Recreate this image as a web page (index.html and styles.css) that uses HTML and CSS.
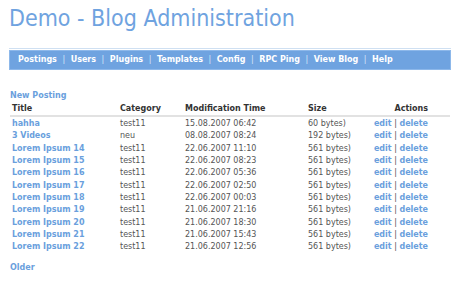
FILE: index.html
```html
<!doctype html>
<html>
	<head>
		<meta charset="utf-8">
		<title>Demo - Blog Administration</title>
		<link rel="stylesheet" href="styles.css">
	</head>
	<body>
		<h1 class="site-title">Demo - Blog Administration</h1>

		<div class="menu">
			<a href="#">Postings</a> <span class="sep">|</span>
			<a href="#">Users</a> <span class="sep">|</span>
			<a href="#">Plugins</a> <span class="sep">|</span>
			<a href="#">Templates</a> <span class="sep">|</span>
			<a href="#">Config</a> <span class="sep">|</span>
			<a href="#">RPC Ping</a> <span class="sep">|</span>
			<a href="#">View Blog</a> <span class="sep">|</span>
			<a href="#">Help</a>
		</div>

		<div class="content">
			<a class="new-posting" href="#">New Posting</a>
			<table class="postings">
				<tr>
					<th class="c-title">Title</th>
					<th class="c-cat">Category</th>
					<th class="c-time">Modification Time</th>
					<th class="c-size">Size</th>
					<th class="c-act">Actions</th>
				</tr>
				<tr><td><a href="#">hahha</a></td><td>test11</td><td>15.08.2007 06:42</td><td>60 bytes)</td><td class="c-act"><a href="#">edit</a> | <a href="#">delete</a></td></tr>
				<tr><td><a href="#">3 Videos</a></td><td>neu</td><td>08.08.2007 08:24</td><td>192 bytes)</td><td class="c-act"><a href="#">edit</a> | <a href="#">delete</a></td></tr>
				<tr><td><a href="#">Lorem Ipsum 14</a></td><td>test11</td><td>22.06.2007 11:10</td><td>561 bytes)</td><td class="c-act"><a href="#">edit</a> | <a href="#">delete</a></td></tr>
				<tr><td><a href="#">Lorem Ipsum 15</a></td><td>test11</td><td>22.06.2007 08:23</td><td>561 bytes)</td><td class="c-act"><a href="#">edit</a> | <a href="#">delete</a></td></tr>
				<tr><td><a href="#">Lorem Ipsum 16</a></td><td>test11</td><td>22.06.2007 05:36</td><td>561 bytes)</td><td class="c-act"><a href="#">edit</a> | <a href="#">delete</a></td></tr>
				<tr><td><a href="#">Lorem Ipsum 17</a></td><td>test11</td><td>22.06.2007 02:50</td><td>561 bytes)</td><td class="c-act"><a href="#">edit</a> | <a href="#">delete</a></td></tr>
				<tr><td><a href="#">Lorem Ipsum 18</a></td><td>test11</td><td>22.06.2007 00:03</td><td>561 bytes)</td><td class="c-act"><a href="#">edit</a> | <a href="#">delete</a></td></tr>
				<tr><td><a href="#">Lorem Ipsum 19</a></td><td>test11</td><td>21.06.2007 21:16</td><td>561 bytes)</td><td class="c-act"><a href="#">edit</a> | <a href="#">delete</a></td></tr>
				<tr><td><a href="#">Lorem Ipsum 20</a></td><td>test11</td><td>21.06.2007 18:30</td><td>561 bytes)</td><td class="c-act"><a href="#">edit</a> | <a href="#">delete</a></td></tr>
				<tr><td><a href="#">Lorem Ipsum 21</a></td><td>test11</td><td>21.06.2007 15:43</td><td>561 bytes)</td><td class="c-act"><a href="#">edit</a> | <a href="#">delete</a></td></tr>
				<tr><td><a href="#">Lorem Ipsum 22</a></td><td>test11</td><td>21.06.2007 12:56</td><td>561 bytes)</td><td class="c-act"><a href="#">edit</a> | <a href="#">delete</a></td></tr>
			</table>
			<a class="older" href="#">Older</a>
		</div>
	</body>
</html>
```

FILE: styles.css
```css
body
{
	margin: 0;
	padding: 0 9px;
	background: #fff;
	font-family: "DejaVu Sans", Verdana, sans-serif;
	font-size: 8px;
	color: #555;
}
a
{
	color: #6a9fdd;
	font-weight: bold;
	text-decoration: none;
}
.site-title
{
	margin: 0;
	padding: 3px 0 0 0;
	height: 49px;
	box-sizing: border-box;
	border-bottom: 1px solid #cfe0f2;
	font-family: "DejaVu Sans Condensed", "DejaVu Sans", sans-serif;
	font-weight: normal;
	font-size: 23px;
	line-height: 30px;
	color: #6fa3e0;
}
.menu
{
	margin-top: 1px;
	height: 20px;
	padding: 0 0 0 8px;
	box-sizing: border-box;
	background: #6fa3e0;
	border: 1px solid #8db8ea;
	color: #d6e6f8;
	line-height: 18px;
	font-size: 8px;
	white-space: nowrap;
}
.menu a
{
	color: #fff;
}
.menu .sep
{
	margin: 0 3px;
}
.content
{
	padding: 21px 1px 0 1px;
}
.new-posting, .older
{
	display: block;
	line-height: 10px;
}
.postings
{
	width: 100%;
	border-collapse: collapse;
	margin-top: 0;
}
.postings th
{
	text-align: left;
	font-weight: bold;
	color: #333;
	height: 14px;
	padding: 0 0 0 2px;
	border-bottom: 2px solid #e2e2e2;
}
.postings td
{
	height: 12.3px;
	padding: 0 0 0 2px;
	line-height: 12px;
	white-space: nowrap;
}
.postings tr:nth-child(2) td
{
	padding-top: 1px;
}
.c-title { width: 106px; }
.c-cat { width: 63px; }
.c-time { width: 121px; }
.c-size { width: 63px; }
.postings .c-act
{
	text-align: right;
	padding-right: 22px;
}
.older
{
	margin-top: 10px;
}
```
